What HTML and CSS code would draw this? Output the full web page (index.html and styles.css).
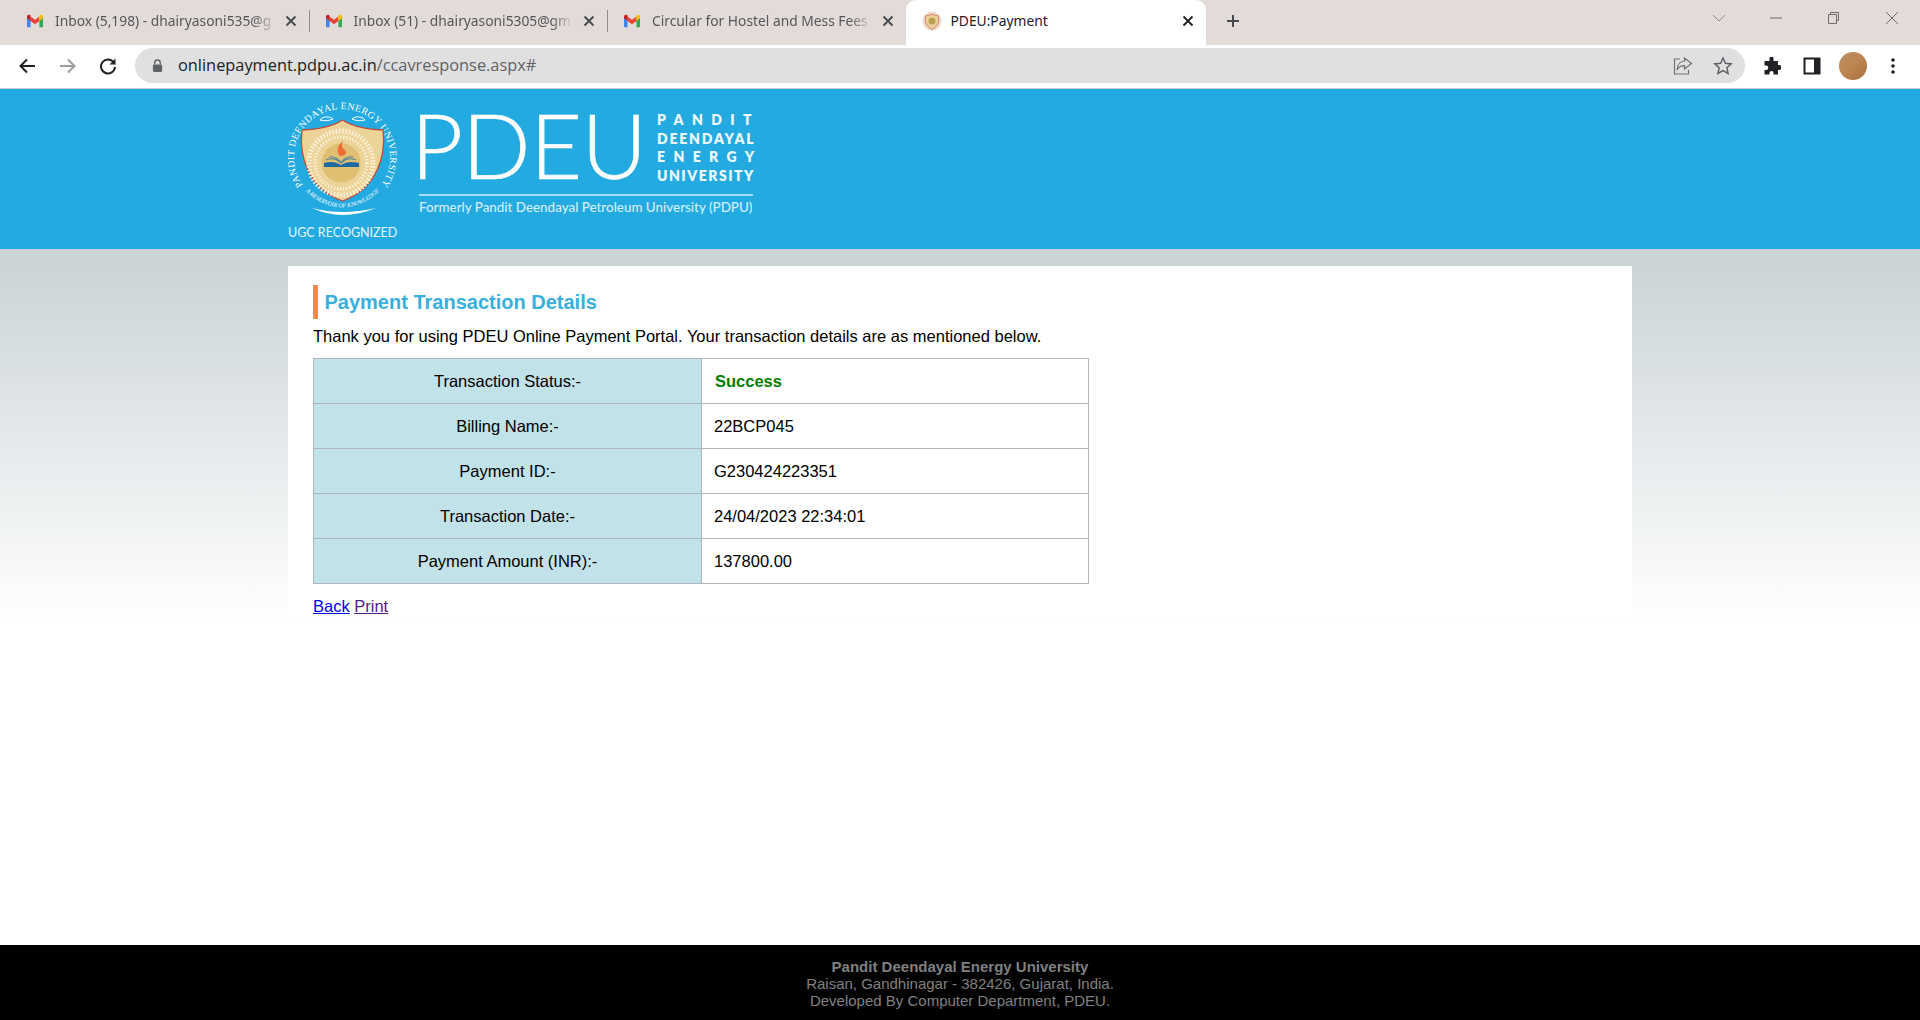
FILE: index.html
```html
<!DOCTYPE html>
<html lang="en">
<head>
<meta charset="utf-8">
<title>PDEU:Payment</title>
<link rel="stylesheet" href="styles.css">
</head>
<body>
<svg class="defs" width="0" height="0" aria-hidden="true">
  <symbol id="gmail" viewBox="0 0 16 16">
    <path fill="#4285f4" d="M0 3.200v10c0 .6.5 1 1 1h2.600V7.200z"/>
    <path fill="#34a853" d="M16 3.200v10c0 .6-.5 1-1 1h-2.600V7.200z"/>
    <path fill="#ea4335" d="M3.600 8V3.400L8 6.700l4.400-3.300V8L8 11.200z"/>
    <path fill="#c5221f" d="M0 3.500C0 2 1.700 1.200 2.800 2l.8.6V8L0 5.300z"/>
    <path fill="#fbbc04" d="M16 3.500C16 2 14.300 1.200 13.200 2l-.8.6V8L16 5.300z"/>
  </symbol>
  <symbol id="close" viewBox="0 0 12 12">
    <path d="M1.500 1.500l9 9m0-9l-9 9" fill="none" stroke="currentColor" stroke-width="1.800"/>
  </symbol>
</svg>

<div class="tabstrip">
  <div class="tab">
    <svg class="fav"><use href="#gmail"/></svg>
    <span class="tab-title">Inbox (5,198) - dhairyasoni535@g</span>
    <svg class="tab-x"><use href="#close"/></svg>
  </div>
  <div class="tab">
    <svg class="fav"><use href="#gmail"/></svg>
    <span class="tab-title">Inbox (51) - dhairyasoni5305@gm</span>
    <svg class="tab-x"><use href="#close"/></svg>
  </div>
  <div class="tab tab-last">
    <svg class="fav"><use href="#gmail"/></svg>
    <span class="tab-title">Circular for Hostel and Mess Fees</span>
    <svg class="tab-x"><use href="#close"/></svg>
  </div>
  <div class="tab tab-active">
    <svg class="fav-seal" viewBox="0 0 20 20">
      <circle cx="10" cy="10" r="9.500" fill="#ead9cb"/>
      <path d="M3.500 5Q10 2 16.500 5V11Q15 16 10 18.500Q5 16 3.500 11z" fill="#ecd09a" stroke="#d98a70"/>
      <circle cx="10" cy="10" r="3.500" fill="#b9a24f"/>
    </svg>
    <span class="tab-title">PDEU:Payment</span>
    <svg class="tab-x"><use href="#close"/></svg>
  </div>
  <svg class="newtab" viewBox="0 0 14 14"><path d="M7 1v12M1 7h12" stroke="#45484c" stroke-width="2" fill="none"/></svg>
  <div class="winctl">
    <svg class="ctl ctl-chev" viewBox="0 0 14 8"><path d="M1 1l6 6 6-6" fill="none" stroke="#8d8a89"/></svg>
    <svg class="ctl ctl-min" viewBox="0 0 14 14"><path d="M1 7h12" stroke="#6f6d6c" fill="none"/></svg>
    <svg class="ctl ctl-max" viewBox="0 0 14 14"><path d="M2.500 3.500h8v9h-8zM4.500 3.500V1.500h8v8h-2" stroke="#6f6d6c" fill="none"/></svg>
    <svg class="ctl ctl-cls" viewBox="0 0 14 14"><path d="M1 1l12 12M13 1L1 13" stroke="#6f6d6c" fill="none"/></svg>
  </div>
</div>

<div class="toolbar">
  <svg class="nav" viewBox="0 0 18 18"><path d="M17 9H3M9 2.500L2.500 9 9 15.500" fill="none" stroke="#202124" stroke-width="2"/></svg>
  <svg class="nav nav-forward" viewBox="0 0 18 18"><path d="M1 9h14M9 2.500L15.500 9 9 15.500" fill="none" stroke="#9a9c9f" stroke-width="2"/></svg>
  <svg class="nav nav-reload" viewBox="0 0 18 18"><path d="M14.800 5.500A7 7 0 1 0 16 10" fill="none" stroke="#202124" stroke-width="2"/><path d="M16.500 1.500V7.500H10.500z" fill="#202124"/></svg>
  <div class="omnibox">
    <svg class="lock" viewBox="0 0 12 14"><path d="M3 6V4a3 3 0 0 1 6 0v2" fill="none" stroke="#5f6368" stroke-width="1.500"/><rect x="1" y="6" width="10" height="8" rx="1.200" fill="#5f6368"/></svg>
    <span class="url"><span class="url-host">onlinepayment.pdpu.ac.in</span>/ccavresponse.aspx#</span>
    <svg class="omni-ico" viewBox="0 0 20 20"><path d="M7 3H1.500v15h14v-4" fill="none" stroke="#6d7175" stroke-width="1.200"/><path d="M11.500 2l7 5.500-7 5.500V9.700C8 9.700 5.500 11 4 14c0-5 3-8.500 7.500-9z" fill="none" stroke="#6d7175" stroke-width="1.200"/></svg>
    <svg class="omni-ico" viewBox="0 0 20 20"><path d="M10 2l2.400 5.300 5.800.6-4.300 3.900 1.200 5.700-5.100-2.900-5.100 2.900 1.200-5.700L1.800 7.900l5.800-.6z" fill="none" stroke="#5f6368" stroke-width="1.500"/></svg>
  </div>
  <svg class="tool tool-puzzle" viewBox="0 0 18 18"><path d="M6.500 1.500a2 2 0 0 1 4 0V4h4.500v4h1a2.300 2.300 0 0 1 0 5h-1v4.500h-4.500v-1.500a2 2 0 0 0-4 0v1.500H1.500V13H3a2.300 2.300 0 0 0 0-4.600H1.500V4h5z" fill="#202124"/></svg>
  <svg class="tool tool-panel" viewBox="0 0 18 18"><path d="M.5.500h17v17H.5z" fill="#202124"/><path d="M2.500 2.500h8.500v13H2.500z" fill="#fff"/></svg>
  <svg class="avatar" viewBox="0 0 28 28"><defs><linearGradient id="av" x1="0" y1="0" x2="1" y2="1"><stop offset="0" stop-color="#b98f66"/><stop offset=".5" stop-color="#bd8450"/><stop offset="1" stop-color="#a8713f"/></linearGradient></defs><circle cx="14" cy="14" r="14" fill="url(#av)"/></svg>
  <svg class="tool tool-dots" viewBox="0 0 4 18"><circle cx="2" cy="3" r="1.800"/><circle cx="2" cy="9" r="1.800"/><circle cx="2" cy="15" r="1.800"/></svg>
</div>

<div class="page">
  <header class="banner">
    <div class="seal-col">
      <svg class="seal" viewBox="0 0 110 120">
        <defs>
          <path id="arcTop" d="M17.200 87.900A48 48 0 1 1 90.800 87.900"/>
          <path id="arcBot" d="M14 88Q54.500 127 95 88"/>
        </defs>
        <text class="seal-text"><textPath href="#arcTop" startOffset="50%" text-anchor="middle">PANDIT DEENDAYAL ENERGY UNIVERSITY</textPath></text>
        <path d="M32 20c3-4 10-4 13-1-4 2-9 2-13 1zM64 19c3-3 10-3 13 1-4 1-9 1-13-1z" fill="none" stroke="#fff" stroke-width="1"/>
        <path d="M14 30C26 30 44 27 54.500 20 65 27 83 30 95 30 98 55 90 88 54.500 101 19 88 11 55 14 30z" fill="#ecd397" stroke="#c6493a" stroke-width="1.300"/>
        <circle cx="53" cy="63" r="32" fill="none" stroke="#fbf3df" stroke-width="5" stroke-dasharray="1.500 1.800"/>
        <circle cx="53" cy="63" r="26" fill="none" stroke="#fbf3df" stroke-width="3.500" stroke-dasharray="1.300 1.800"/>
        <circle cx="53" cy="63" r="19.500" fill="#e1bf72"/>
        <path d="M55 41c-6 5-7 10-3 15 3 0 6-1 6-4-1-3-4-3-4-6 0-2 0-3 1-5z" fill="#ee6b33"/>
        <path d="M38 60c6-3 11-1 15 3M68 60c-6-3-11-1-15 3M41 57c5-1 9 1 12 6M65 57c-5-1-9 1-12 6" fill="none" stroke="#51849c" stroke-width="1.200"/>
        <path d="M36 63c7-2 12-1 17 2 5-3 10-4 18-2v4H36z" fill="#1c6aa4"/>
        <text class="seal-motto"><textPath href="#arcBot" startOffset="50%" text-anchor="middle">A RESERVOIR OF KNOWLEDGE</textPath></text>
        <path d="M24 108Q54 122 88 108Q54 116 24 108z" fill="#fff"/>
      </svg>
      <div class="ugc">UGC RECOGNIZED</div>
    </div>
    <div class="brand">
      <div class="brand-top">
        <div class="brand-big">PDEU</div>
        <div class="brand-stack">
          <div class="stack-line stack-wide">PANDIT</div>
          <div class="stack-line stack-tight">DEENDAYAL</div>
          <div class="stack-line stack-wide">ENERGY</div>
          <div class="stack-line stack-mid">UNIVERSITY</div>
        </div>
      </div>
      <div class="brand-sub">Formerly Pandit Deendayal Petroleum University (PDPU)</div>
    </div>
  </header>

  <main class="main">
    <section class="card">
      <h1 class="card-title">Payment Transaction Details</h1>
      <p class="intro">Thank you for using PDEU Online Payment Portal. Your transaction details are as mentioned below.</p>
      <table class="details">
        <tr><th>Transaction Status:-</th><td class="ok">Success</td></tr>
        <tr><th>Billing Name:-</th><td>22BCP045</td></tr>
        <tr><th>Payment ID:-</th><td>G230424223351</td></tr>
        <tr><th>Transaction Date:-</th><td>24/04/2023 22:34:01</td></tr>
        <tr><th>Payment Amount (INR):-</th><td>137800.00</td></tr>
      </table>
      <div class="links"><a class="link" href="#">Back</a> <a class="link link-seen" href="#">Print</a></div>
    </section>
  </main>

  <footer class="footer">
    <strong>Pandit Deendayal Energy University</strong><br>
    Raisan, Gandhinagar - 382426, Gujarat, India.<br>
    Developed By Computer Department, PDEU.
  </footer>
</div>
</body>
</html>
```

FILE: styles.css
```css
* { box-sizing: border-box; }
html, body { margin: 0; height: 100%; }
body {
  display: flex;
  flex-direction: column;
  height: 100vh;
  overflow: hidden;
  background: #fff;
  font-family: "Liberation Sans", Arial, sans-serif;
}
.defs { position: absolute; }

/* Tab strip */
.tabstrip {
  display: flex;
  align-items: stretch;
  height: 45px;
  padding-left: 10px;
  background: #e3dbd8;
  flex: none;
}
.tab {
  position: relative;
  display: flex;
  align-items: center;
  width: 298.500px;
  height: 43px;
  padding: 0 12px 2px 17px;
  color: #54575b;
  font: 13.800px/20px "Noto Sans", "Open Sans", sans-serif;
}
.tab::after {
  content: "";
  position: absolute;
  right: -1px;
  top: 10px;
  height: 22px;
  width: 1px;
  background: #8f8c8b;
}
.tab-last::after, .tab-active::after { display: none; }
.tab-active {
  height: 45px;
  width: 300px;
  padding: 0 12px 4px 16px;
  background: #fff;
  border-radius: 10px 10px 0 0;
  color: #202124;
}
.fav { width: 16px; height: 16px; flex: none; }
.fav-seal { width: 20px; height: 20px; flex: none; margin-right: -3px; }
.tab-title {
  flex: 1;
  min-width: 0;
  margin-left: 12px;
  overflow: hidden;
  white-space: nowrap;
  -webkit-mask-image: linear-gradient(to right, #000 calc(100% - 24px), transparent);
  mask-image: linear-gradient(to right, #000 calc(100% - 24px), transparent);
}
.tab-active .tab-title { -webkit-mask-image: none; mask-image: none; }
.tab-x { width: 12px; height: 12px; flex: none; margin-left: 8px; color: #45484c; }
.tab-active .tab-x { color: #202124; }
.newtab { width: 14px; height: 14px; margin: 14px 0 0 20px; flex: none; }
.winctl {
  display: flex;
  align-items: flex-start;
  margin-left: auto;
  padding: 11px 21px 0 0;
  gap: 43px;
}
.ctl { width: 14px; height: 14px; flex: none; }
.ctl-chev { margin-top: 3px; height: 8px; }
.ctl-cls { margin-left: 2px; }

/* Toolbar */
.toolbar {
  display: flex;
  align-items: center;
  height: 43px;
  padding: 3px 18px 5px 18px;
  background: #fff;
  flex: none;
}
.nav { width: 18px; height: 18px; flex: none; margin-right: 23px; }
.nav-forward { margin-right: 22px; }
.nav-reload { margin-right: 18px; }
.omnibox {
  display: flex;
  align-items: center;
  width: 1610px;
  height: 35px;
  margin-right: 18px;
  padding: 0 12px 0 17px;
  background: #e0e0e0;
  border-radius: 18px;
}
.lock { width: 11px; height: 13px; flex: none; }
.url {
  flex: 1;
  margin-left: 15px;
  color: #5f6368;
  font: 16.350px/1 "Open Sans", "Noto Sans", sans-serif;
  white-space: nowrap;
}
.url-host { color: #202124; }
.omni-ico { width: 20px; height: 20px; flex: none; margin-left: 20px; }
.tool { flex: none; fill: #202124; }
.tool-puzzle { width: 18px; height: 18px; margin-right: 22px; }
.tool-panel { width: 18px; height: 18px; margin-right: 18px; }
.avatar { width: 28px; height: 28px; flex: none; margin-right: 24px; }
.tool-dots { width: 4px; height: 18px; }

/* Page */
.page {
  flex: 1;
  display: flex;
  flex-direction: column;
  min-height: 0;
  padding-top: 1px;
  background: #c5cdd0;
}
.banner {
  display: flex;
  height: 160px;
  padding: 11px 0 0 288px;
  background: #22aae1;
  color: #fff;
  flex: none;
}
.seal-col { width: 110px; flex: none; }
.seal { display: block; width: 110px; height: 120px; }
.seal-text { font: 9.800px "Liberation Serif", serif; fill: #fff; letter-spacing: .35px; }
.seal-motto { font: italic 5.900px "Liberation Serif", serif; fill: #fff; }
.ugc {
  margin-top: 6px;
  color: #e8f6fc;
  font: 12.500px/14px "Lato", sans-serif;
  white-space: nowrap;
}
.brand { width: 334px; margin: 4px 0 0 21px; flex: none; }
.brand-top {
  display: flex;
  justify-content: space-between;
  height: 92px;
  padding-bottom: 8px;
  border-bottom: 2px solid #a7dcf3;
}
.brand-big {
  font: 300 90px/80px "Lato", sans-serif;
  height: 80px;
  margin-left: -8px;
  letter-spacing: -.7px;
  -webkit-text-stroke: .6px #fff;
}
.brand-stack { width: 96px; padding-top: 7px; }
.stack-line { font: 800 14px/18.500px "Lato", sans-serif; white-space: nowrap; color: #eef9fd; }
.stack-wide { letter-spacing: 8.400px; }
.stack-tight { letter-spacing: 1.800px; }
.stack-mid { letter-spacing: 1.500px; }
.brand-sub {
  margin-top: 4px;
  color: #d5eef9;
  font: 500 13.400px/15px "Lato", sans-serif;
  white-space: nowrap;
}

.main {
  flex: 1;
  min-height: 0;
  padding: 17px 288px 0;
  background: linear-gradient(#c9d2d5, #fff 372px);
}
.card {
  height: 354px;
  padding: 19px 25px 0;
  background: #fff;
  color: #000;
}
.card-title {
  margin: 0;
  height: 34px;
  padding-left: 6.500px;
  border-left: 5px solid #ee8a4f;
  color: #38b0de;
  font: 700 20px/34px "Liberation Sans", Arial, sans-serif;
}
.intro { margin: 6px 0 0; font-size: 16.500px; line-height: 23px; }
.details {
  width: 776px;
  margin-top: 10px;
  border-collapse: collapse;
  table-layout: fixed;
  font-size: 16.500px;
}
.details th, .details td {
  height: 45px;
  border: 1px solid #b0b7ba;
  font-weight: 400;
  padding: 0;
}
.details th { width: 388px; background: #c2e2ea; text-align: center; }
.details td { padding-left: 12px; }
.details .ok { color: #008000; font-weight: 700; padding-left: 13px; }
.links { margin-top: 12px; font-size: 16.500px; line-height: 20px; }
.link { color: #0000ee; }
.link-seen { color: #551a8b; }

.footer {
  height: 75px;
  padding-top: 13px;
  flex: none;
  background: #000;
  color: #808080;
  text-align: center;
  font-size: 15px;
  line-height: 17px;
}
```
